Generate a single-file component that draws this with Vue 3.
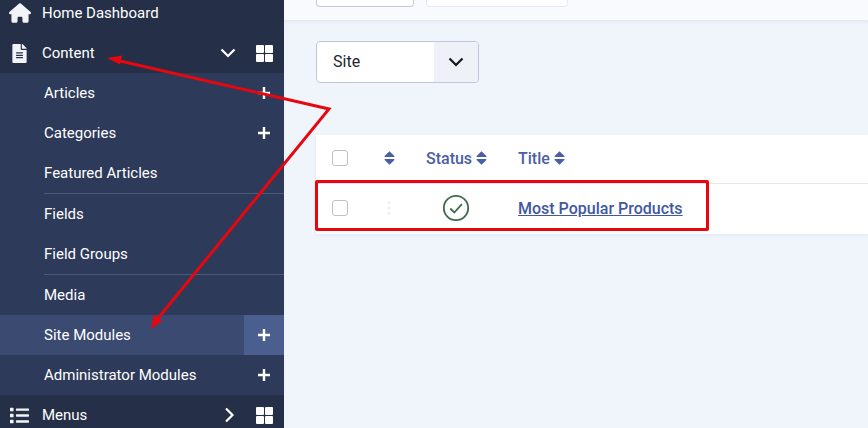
<script setup>
const homePath = "M575.8 255.5c0 18-15 32.1-32 32.1h-32l.7 160.2c0 2.7-.2 5.4-.5 8.1V472c0 22.1-17.9 40-40 40H456c-1.1 0-2.2 0-3.3-.1c-1.4 .1-2.8 .1-4.2 .1H416 392c-22.1 0-40-17.9-40-40V448 384c0-17.7-14.3-32-32-32H256c-17.7 0-32 14.3-32 32v64 24c0 22.1-17.9 40-40 40H160 128.1c-1.5 0-3-.1-4.5-.2c-1.2 .1-2.4 .2-3.6 .2H104c-22.1 0-40-17.9-40-40V360c0-.9 0-1.9 .1-2.8V287.6H32c-18 0-32-14-32-32.1c0-9 3-17 10-24L266.4 8c7-7 15-8 22-8s15 2 21 7L564.8 231.5c8 7 12 15 11 24z";
const filePath = "M224 136V0H24C10.7 0 0 10.7 0 24v464c0 13.3 10.7 24 24 24h336c13.3 0 24-10.7 24-24V160H248c-13.2 0-24-10.8-24-24zm64 236c0 6.6-5.4 12-12 12H108c-6.6 0-12-5.4-12-12v-8c0-6.6 5.4-12 12-12h168c6.6 0 12 5.4 12 12v8zm0-64c0 6.6-5.4 12-12 12H108c-6.6 0-12-5.4-12-12v-8c0-6.6 5.4-12 12-12h168c6.6 0 12 5.4 12 12v8zm0-72v8c0 6.6-5.4 12-12 12H108c-6.6 0-12-5.4-12-12v-8c0-6.6 5.4-12 12-12h168c6.6 0 12 5.4 12 12zm96-114.1v6.1H256V0h6.1c6.4 0 12.5 2.5 17 7l97.9 98c4.5 4.5 7 10.6 7 16.9z";
const listPath = "M80 368H16a16 16 0 0 0-16 16v64a16 16 0 0 0 16 16h64a16 16 0 0 0 16-16v-64a16 16 0 0 0-16-16zm0-320H16A16 16 0 0 0 0 64v64a16 16 0 0 0 16 16h64a16 16 0 0 0 16-16V64a16 16 0 0 0-16-16zm0 160H16a16 16 0 0 0-16 16v64a16 16 0 0 0 16 16h64a16 16 0 0 0 16-16v-64a16 16 0 0 0-16-16zm416 176H176a16 16 0 0 0-16 16v32a16 16 0 0 0 16 16h320a16 16 0 0 0 16-16v-32a16 16 0 0 0-16-16zm0-320H176a16 16 0 0 0-16 16v32a16 16 0 0 0 16 16h320a16 16 0 0 0 16-16V80a16 16 0 0 0-16-16zm0 160H176a16 16 0 0 0-16 16v32a16 16 0 0 0 16 16h320a16 16 0 0 0 16-16v-32a16 16 0 0 0-16-16z";
const sortPath = "M6 .4L11.6 5.8a.6.6 0 0 1-.4 1H.8a.6.6 0 0 1-.4-1zM6 15.6L.4 10.2a.6.6 0 0 1 .4-1h10.4a.6.6 0 0 1 .4 1z";

const subItems = [
  { name: "Articles", plus: true },
  { name: "Categories", plus: true },
  { name: "Featured Articles" },
  { name: "Fields", divider: true },
  { name: "Field Groups" },
  { name: "Media", divider: true },
  { name: "Site Modules", plus: true, active: true },
  { name: "Administrator Modules", plus: true },
];
</script>

<template>
  <div class="page">
    <aside class="sidebar">
      <div class="top-row home">
        <svg class="ico ico-home" viewBox="0 0 576 512"><path :d="homePath" /></svg>
        <span class="top-label">Home Dashboard</span>
      </div>
      <div class="top-row">
        <svg class="ico ico-file" viewBox="0 0 384 512"><path :d="filePath" /></svg>
        <span class="top-label">Content</span>
        <svg class="chev chev-down" viewBox="0 0 16 16"><path d="M1.5 4.5l6.5 6.5 6.5-6.5" /></svg>
        <span class="grid-ico"><i></i><i></i><i></i><i></i></span>
      </div>
      <ul class="sub">
        <li
          v-for="item in subItems"
          :key="item.name"
          :class="{ divider: item.divider, active: item.active }"
        >
          <span class="sub-label">{{ item.name }}</span>
          <span v-if="item.plus" class="plus">
            <svg viewBox="0 0 14 14"><path d="M7 1v12M1 7h12" /></svg>
          </span>
        </li>
      </ul>
      <div class="top-row">
        <svg class="ico ico-list" viewBox="0 0 512 512"><path :d="listPath" /></svg>
        <span class="top-label">Menus</span>
        <svg class="chev chev-right" viewBox="0 0 16 16"><path d="M5 1.5l6.5 6.5-6.5 6.5" /></svg>
        <span class="grid-ico"><i></i><i></i><i></i><i></i></span>
      </div>
    </aside>

    <main class="main">
      <div class="toolbar">
        <div class="tool-btn first"></div>
        <div class="tool-btn second"></div>
      </div>

      <div class="select">
        <span class="select-value">Site</span>
        <span class="select-arrow">
          <svg viewBox="0 0 16 16"><path d="M1.5 4.5l6.5 6.5 6.5-6.5" /></svg>
        </span>
      </div>

      <div class="table">
        <div class="tr head">
          <span class="cell"><span class="check"></span></span>
          <span class="cell center">
            <svg class="sort" viewBox="0 0 12 16"><path :d="sortPath" /></svg>
          </span>
          <span class="cell status-head">Status
            <svg class="sort" viewBox="0 0 12 16"><path :d="sortPath" /></svg>
          </span>
          <span class="cell title-head">Title
            <svg class="sort" viewBox="0 0 12 16"><path :d="sortPath" /></svg>
          </span>
        </div>
        <div class="tr body">
          <span class="cell"><span class="check"></span></span>
          <span class="cell center">
            <svg class="drag" viewBox="0 0 4 16"><circle cx="2" cy="2.5" r="1.5" /><circle cx="2" cy="8" r="1.5" /><circle cx="2" cy="13.5" r="1.5" /></svg>
          </span>
          <span class="cell center">
            <svg class="status-ok" viewBox="0 0 28 28"><circle cx="14" cy="14" r="12.2" /><path d="M8.3 14.5l4 4 7.6-8.4" /></svg>
          </span>
          <span class="cell title-cell"><a class="link">Most Popular Products</a></span>
        </div>
      </div>
    </main>

    <!-- annotations drawn on top of the screenshot -->
    <div class="mark-box"></div>
    <svg class="arrows" viewBox="0 0 868 428">
      <path class="arrow-line" d="M118 60.5L329 109L155 322" />
      <path class="arrow-head" d="M107 58L122 55.5L120 64.5z" />
      <path class="arrow-head" d="M151 329L154 314.5L162 321z" />
    </svg>
  </div>
</template>

<style scoped>
.page {
  position: relative;
  display: flex;
  width: 868px;
  height: 428px;
  overflow: hidden;
  background: #f0f4fb;
  font-family: Roboto, "Liberation Sans", sans-serif;
  font-size: 15px;
}

.sidebar {
  flex: 0 0 284px;
  margin-top: -7px;
  background: #252f48;
  color: #fff;
}
.top-row {
  display: flex;
  align-items: center;
  height: 40px;
  background: #252f48;
}
.ico {
  fill: #f3f4f7;
  flex: none;
}
.ico-home {
  width: 22px;
  height: 20px;
  margin: 0 11px 0 9px;
}
.ico-file {
  width: 15px;
  height: 19px;
  margin: 0 15px 0 12px;
}
.ico-list {
  width: 19px;
  height: 19px;
  margin: 0 13px 0 10px;
}
.top-label {
  flex: 1;
}
.chev {
  width: 16px;
  height: 16px;
  fill: none;
  stroke: #fff;
  stroke-width: 2.2;
}
.chev-down {
  margin-right: 20px;
}
.chev-right {
  margin-right: 19px;
}
.grid-ico {
  display: grid;
  grid-template-columns: 8px 8px;
  grid-template-rows: 8px 8px;
  gap: 1px;
  margin-right: 11px;
}
.grid-ico i {
  background: #fff;
  border-radius: 1px;
}

.sub {
  list-style: none;
  margin: 0;
  padding: 0;
  background: #2d3a59;
}
.sub li {
  display: flex;
  align-items: stretch;
  height: 40px;
  position: relative;
}
.sub li.divider {
  height: 41px;
}
.sub li.divider::before {
  content: "";
  position: absolute;
  top: 0;
  left: 44px;
  right: 0;
  height: 1px;
  background: #4c5a7b;
}
.sub li.active {
  background: #3b4a70;
}
.sub-label {
  flex: 1;
  align-self: center;
  padding-left: 44px;
}
.plus {
  width: 40px;
  display: flex;
  align-items: center;
  justify-content: center;
}
.plus svg {
  width: 14px;
  height: 14px;
  fill: none;
  stroke: #fff;
  stroke-width: 2.4;
}
.active .plus {
  background: #4a5f8f;
}

.main {
  flex: 1;
  min-width: 0;
}
.toolbar {
  display: flex;
  gap: 12px;
  height: 20px;
  padding-left: 32px;
  background: #f9fafd;
  box-shadow: 0 1px 4px rgba(40, 60, 110, 0.1);
}
.tool-btn {
  height: 7px;
  margin-top: -1px;
  background: #fff;
  border: 1px solid #c4cad9;
  border-top: none;
  border-radius: 0 0 4px 4px;
}
.first {
  width: 96px;
}
.second {
  width: 140px;
  border-color: #e6e9f2;
}

.select {
  display: flex;
  width: 161px;
  height: 40px;
  margin: 21px 0 0 32px;
  border: 1px solid #c0c6d9;
  border-radius: 4px;
  overflow: hidden;
  background: #fff;
}
.select-value {
  flex: 1;
  padding-left: 16px;
  line-height: 39px;
  font-size: 16px;
  color: #22262e;
}
.select-arrow {
  width: 44px;
  display: flex;
  align-items: center;
  justify-content: center;
  background: #eef1f8;
}
.select-arrow svg {
  width: 16px;
  height: 16px;
  fill: none;
  stroke: #14171c;
  stroke-width: 2.2;
}

.table {
  margin: 52px 0 0 32px;
  background: #fff;
  box-shadow: 0 1px 3px rgba(40, 60, 110, 0.08);
}
.tr {
  display: grid;
  grid-template-columns: 54px 38px 96px 1fr;
  align-items: center;
  font-size: 16px;
  box-sizing: border-box;
}
.head {
  height: 49px;
  padding-bottom: 2px;
  border-bottom: 1px solid #e4e7ee;
  color: #4a5fa5;
  font-weight: 500;
}
.body {
  height: 50px;
  padding-bottom: 2px;
}
.cell {
  display: flex;
  align-items: center;
}
.center {
  justify-content: center;
}
.check {
  width: 14px;
  height: 14px;
  margin-left: 16px;
  border: 1px solid #bcc1cc;
  border-radius: 3px;
  background: #fff;
}
.sort {
  width: 11px;
  height: 14px;
  fill: #4a5fa5;
}
.status-head {
  gap: 4px;
  padding-left: 18px;
}
.title-head {
  gap: 4px;
  padding-left: 14px;
}
.title-cell {
  padding-left: 14px;
}
.drag {
  width: 4px;
  height: 16px;
  fill: #eceef3;
}
.status-ok {
  width: 28px;
  height: 28px;
  fill: none;
  stroke: #3d6b4b;
  stroke-width: 1.8;
}
.link {
  color: #41589f;
  font-weight: 500;
  text-decoration: underline;
}

.mark-box {
  position: absolute;
  left: 315px;
  top: 180px;
  width: 388px;
  height: 45px;
  border: 3px solid #e6070f;
  border-radius: 2px;
}
.arrows {
  position: absolute;
  left: 0;
  top: 0;
  width: 868px;
  height: 428px;
  pointer-events: none;
}
.arrow-line {
  fill: none;
  stroke: #e6070f;
  stroke-width: 3;
}
.arrow-head {
  fill: #e6070f;
}
</style>
